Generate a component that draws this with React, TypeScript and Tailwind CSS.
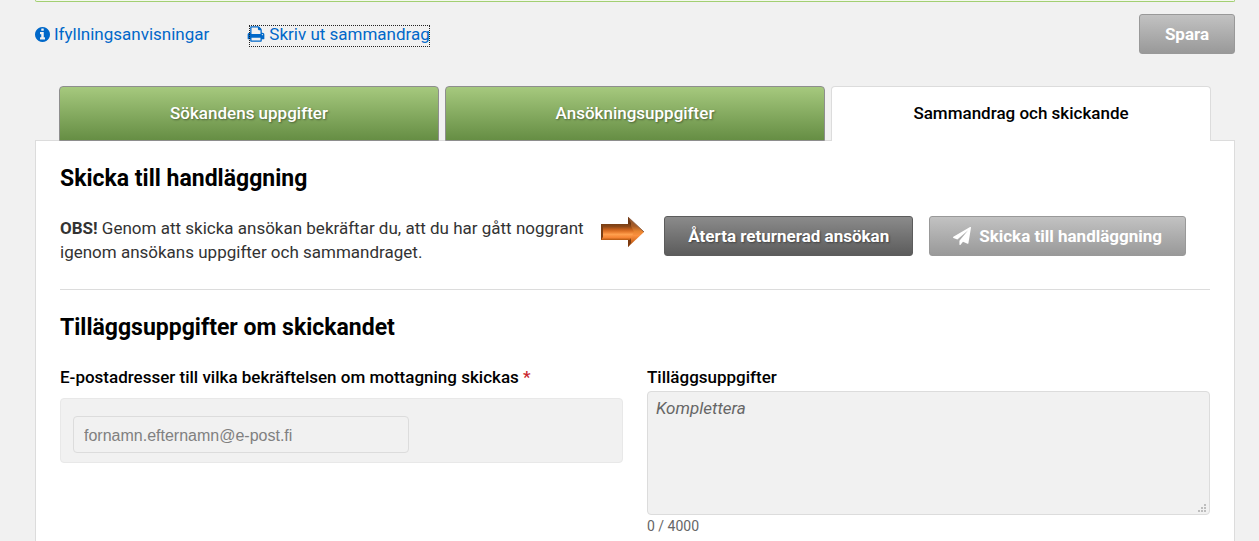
import { useState } from "react";

interface IconProps {
  path: string;
  viewBox?: string;
  className: string;
}

interface TabProps {
  label: string;
  active: boolean;
  onSelect: () => void;
}

const MAX_LENGTH = 4000;

const TABS = [
  "Sökandens uppgifter",
  "Ansökningsuppgifter",
  "Sammandrag och skickande",
];

const INFO_PATH =
  "M1152 1376v-160q0-14-9-23t-23-9h-96v-512q0-14-9-23t-23-9h-320q-14 0-23 9t-9 23v160q0 14 9 23t23 9h96v320h-96q-14 0-23 9t-9 23v160q0 14 9 23t23 9h448q14 0 23-9t9-23zm-128-896v-160q0-14-9-23t-23-9h-192q-14 0-23 9t-9 23v160q0 14 9 23t23 9h192q14 0 23-9t9-23zm640 416q0 209-103 385.5t-279.5 279.5-385.5 103-385.5-103-279.5-279.5-103-385.5 103-385.5 279.5-279.5 385.5-103 385.5 103 279.5 279.5 103 385.5z";
const PRINT_PATH =
  "M448 1536h896v-256h-896v256zm0-640h896v-384h-160q-40 0-68-28t-28-68v-160h-640v640zm1152 64q0-26-19-45t-45-19-45 19-19 45 19 45 45 19 45-19 19-45zm128 0v416q0 13-9.5 22.5t-22.5 9.5h-224v160q0 40-28 68t-68 28h-960q-40 0-68-28t-28-68v-160h-224q-13 0-22.5-9.5t-9.5-22.5v-416q0-79 56.5-135.5t135.5-56.5h64v-544q0-40 28-68t68-28h672q40 0 88 20t76 48l152 152q28 28 48 76t20 88v256h64q79 0 135.5 56.5t56.5 135.5z";
const SEND_PATH =
  "M1764 11q33 24 27 64l-256 1536q-5 29-32 45-14 8-31 8-11 0-24-5l-453-185-242 295q-18 23-49 23-13 0-22-4-19-7-30.5-23.5t-11.5-36.5v-349l864-1059-1069 925-395-162q-37-14-40-55-2-40 32-59l1664-960q15-9 32-9 20 0 36 11z";

function Icon({ path, viewBox = "0 0 1792 1792", className }: IconProps) {
  return (
    <svg
      viewBox={viewBox}
      fill="currentColor"
      aria-hidden="true"
      className={className}
    >
      <path d={path} />
    </svg>
  );
}

function Arrow() {
  return (
    <svg
      viewBox="0 0 43 32"
      aria-hidden="true"
      className="mr-5 h-8 w-[43px] shrink-0"
    >
      <defs>
        <linearGradient id="shaft" x1="0" y1="0" x2="0" y2="1">
          <stop offset="0" stopColor="#7a3f14" />
          <stop offset="0.15" stopColor="#8a4717" />
          <stop offset="0.35" stopColor="#c9621c" />
          <stop offset="0.5" stopColor="#e87c2e" />
          <stop offset="0.65" stopColor="#ffa04e" />
          <stop offset="0.85" stopColor="#f58433" />
          <stop offset="1" stopColor="#b0560f" />
        </linearGradient>
        <linearGradient id="head" x1="0" y1="0" x2="0" y2="1">
          <stop offset="0" stopColor="#8c5630" />
          <stop offset="0.3" stopColor="#a85c26" />
          <stop offset="0.48" stopColor="#e8842f" />
          <stop offset="0.62" stopColor="#fb9040" />
          <stop offset="0.8" stopColor="#d86d20" />
          <stop offset="1" stopColor="#8c4413" />
        </linearGradient>
      </defs>
      <path d="M27 1L43 16L27 31Z" fill="url(#head)" />
      <path d="M27 1L30 7V13H27Z" fill="#6b3512" />
      <path d="M27 31V24L30 20V27Z" fill="#7c3a10" />
      <path d="M0 8H29L33 16L29 24H0Z" fill="url(#shaft)" />
      <path d="M0 8L2 11V21L0 24Z" fill="#7a3f14" />
      <path d="M27 1L43 16" stroke="#8a5a3c" strokeWidth="1" />
    </svg>
  );
}

function Tab({ label, active, onSelect }: TabProps) {
  return (
    <button
      type="button"
      role="tab"
      aria-selected={active}
      onClick={onSelect}
      className={
        active
          ? "h-[55px] flex-1 rounded-t border border-b-0 border-[#dcdcdc] bg-white pb-0.5 font-medium text-black"
          : "h-[55px] flex-1 rounded-t border border-[#8e8e8e] bg-linear-to-b from-[#a6c97e] to-[#668e44] pb-0.5 font-medium text-white text-shadow-[1px_1px_2px_rgba(0,0,0,0.4)]"
      }
    >
      {label}
    </button>
  );
}

function App() {
  const [activeTab, setActiveTab] = useState(2);
  const [email, setEmail] = useState("");
  const [notes, setNotes] = useState("");

  return (
    <div className="min-h-screen bg-[#f1f1f1] pr-6 pl-[35px] font-[Roboto,sans-serif] text-[17px] leading-6 text-[#333]">
      <div className="h-0.5 rounded-b border border-t-0 border-[#a3cf72] bg-[#f4f9ee]"></div>

      <div className="flex items-start justify-between pt-3">
        <div className="flex items-start gap-10 pt-[11px] leading-[18px] text-[#0068c9]">
          <a href="#anvisningar" className="flex items-center gap-1">
            <Icon
              path={INFO_PATH}
              viewBox="128 128 1536 1536"
              className="size-[15px]"
            />
            Ifyllningsanvisningar
          </a>
          <a
            href="#sammandrag"
            className="flex items-center gap-1 pb-1 outline-1 -outline-offset-1 outline-[#222] outline-dotted"
          >
            <Icon path={PRINT_PATH} className="-ml-0.5 size-[18px]" />
            Skriv ut sammandrag
          </a>
        </div>
        <button
          type="button"
          className="h-10 min-w-24 rounded-[3px] border border-[#999] bg-linear-to-b from-[#c2c2c2] to-[#999] px-[23px] font-bold text-white"
        >
          Spara
        </button>
      </div>

      <div role="tablist" className="relative mx-6 mt-8 -mb-px flex gap-1.5">
        {TABS.map((label, index) => (
          <Tab
            key={label}
            label={label}
            active={index === activeTab}
            onSelect={() => setActiveTab(index)}
          />
        ))}
      </div>

      <main className="min-h-[401px] border border-b-0 border-[#dcdcdc] bg-white px-6 pt-6">
        <h2 className="text-[23px] leading-7 font-bold text-black">
          Skicka till handläggning
        </h2>
        <div className="flex items-start pt-[23px] pb-[25px]">
          <p className="flex-1 pr-2">
            <strong>OBS!</strong> Genom att skicka ansökan bekräftar du, att du
            har gått noggrant igenom ansökans uppgifter och sammandraget.
          </p>
          <div className="mr-6 flex shrink-0 items-start">
            <Arrow />
            <button
              type="button"
              className="mr-4 h-10 rounded-[3px] border border-[#5c5c5c] bg-linear-to-b from-[#8b8b8b] to-[#5c5c5c] px-[23px] font-bold text-white text-shadow-[1px_1px_2px_rgba(0,0,0,0.4)]"
            >
              Återta returnerad ansökan
            </button>
            <button
              type="button"
              className="flex h-10 items-center gap-2 rounded-[3px] border border-[#999] bg-linear-to-b from-[#c2c2c2] to-[#999] px-[23px] font-bold text-white"
            >
              <Icon path={SEND_PATH} className="size-[18px]" />
              Skicka till handläggning
            </button>
          </div>
        </div>

        <hr className="border-[#dcdcdc]" />

        <h2 className="pt-6 text-[23px] leading-7 font-bold text-black">
          Tilläggsuppgifter om skickandet
        </h2>
        <div className="grid grid-cols-2 gap-6 pt-[23px]">
          <div>
            <label
              htmlFor="email-input"
              className="block font-medium text-black"
            >
              E-postadresser till vilka bekräftelsen om mottagning skickas{" "}
              <span className="text-[#c9252c]">*</span>
            </label>
            <div className="mt-[9px] rounded border border-[#e8e8e8] bg-[#f1f1f1] px-3 pt-[17px] pb-[9px]">
              <input
                id="email-input"
                type="email"
                required
                placeholder="fornamn.efternamn@e-post.fi"
                value={email}
                onChange={(event) => setEmail(event.target.value)}
                className="block h-[37px] w-[336px] max-w-full rounded border border-[#dcdcdc] px-2.5 pt-0.5 font-['Liberation_Sans',sans-serif] text-base placeholder:text-[#808080]"
              />
            </div>
          </div>
          <div>
            <label
              htmlFor="notes-input"
              className="block font-medium text-black"
            >
              Tilläggsuppgifter
            </label>
            <div className="relative mt-0.5">
              <textarea
                id="notes-input"
                placeholder="Komplettera"
                maxLength={MAX_LENGTH}
                value={notes}
                onChange={(event) => setNotes(event.target.value)}
                className="block h-[124px] w-full resize-none rounded border border-[#dcdcdc] bg-[#f1f1f1] px-2 py-1 placeholder:text-[#666] placeholder:italic"
              ></textarea>
              <svg
                viewBox="0 0 8 8"
                fill="#bdbdbd"
                aria-hidden="true"
                className="pointer-events-none absolute right-1 bottom-[3px] size-2"
              >
                <path d="M6 0h2v2H6zM3 3h2v2H3zM6 3h2v2H6zM0 6h2v2H0zM3 6h2v2H3zM6 6h2v2H6z" />
              </svg>
            </div>
            <p className="text-sm leading-[22px] text-[#666]">
              {notes.length} / {MAX_LENGTH}
            </p>
          </div>
        </div>
      </main>
    </div>
  );
}

export default App;
